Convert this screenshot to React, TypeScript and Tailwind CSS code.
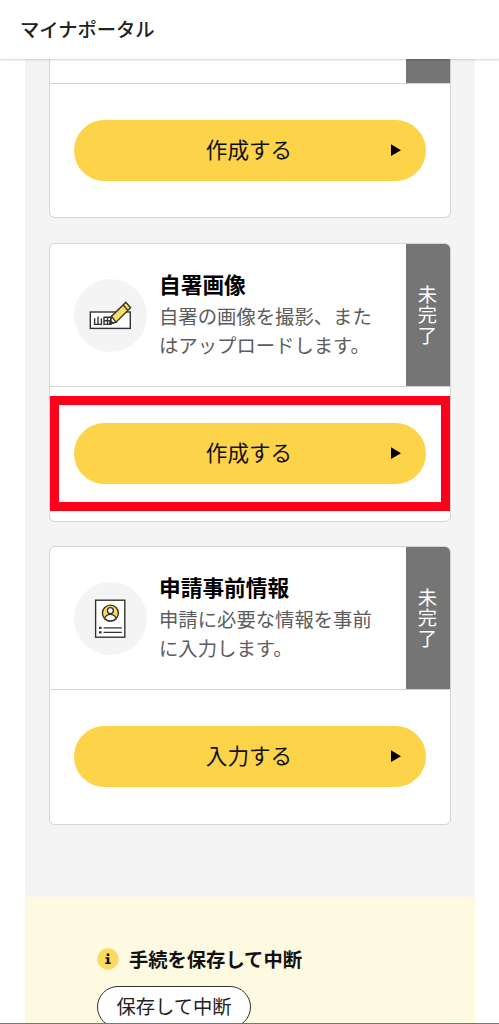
import type { ReactNode } from 'react';

function SignatureIcon() {
  return (
    <svg width="44" height="34" viewBox="0 0 44 34" fill="none" stroke="#333" strokeWidth="1.4">
      <rect x="1.3" y="13" width="40" height="16.4" fill="#fff" />
      <path d="M5.6 19.2v6.2h6.8v-6.2M9 17.4v8M15 18.2h7v7.2h-7zM18.5 18.2v7.2M15 21.8h7" />
      <path d="M21.3 24.4l1.2-7L36.8 3.3l4.8 5.5-14.6 14.4z" fill="#fbdc62" />
      <path d="M21.3 24.4l1.2-7 4.5 5.8z" fill="#fff" />
      <path d="M20.8 24.9l.7-3.4 2.4 2.6z" fill="#333" />
      <path d="M34.2 6l4.6 5.4" />
    </svg>
  );
}

function ProfileIcon() {
  return (
    <svg width="34" height="42" viewBox="0 0 34 42" fill="none" stroke="#333" strokeWidth="1.4">
      <rect x="1.6" y="2.2" width="29.2" height="37" fill="#fff" />
      <circle cx="16.4" cy="15.1" r="8" fill="#fbdc62" />
      <path d="M10.6 20.5c1.2-3.2 3.3-4.1 5.8-4.1s4.6.9 5.8 4.1c-3.4 3.3-8.2 3.3-11.6 0z" fill="#fff" />
      <circle cx="16.4" cy="12.6" r="3" fill="#fff" />
      <path d="M9.5 29.9h18.3M9.5 34.4h18.3" />
      <path d="M5 29.9h2.6M5 34.4h2.6" strokeWidth="2.4" />
    </svg>
  );
}

function ActionButton({ label }: { label: string }) {
  return (
    <button className="relative flex h-[61px] w-[352px] items-center justify-center rounded-full bg-[#fdd34a] text-[21.6px] leading-[30px] text-[#111]">
      <span className="-translate-x-px -translate-y-[2px]">{label}</span>
      <svg className="absolute top-[24px] right-[24px]" width="11" height="12" viewBox="0 0 11 12">
        <path d="M0 0.3L10 6.2L0 12Z" fill="#000" />
      </svg>
    </button>
  );
}

interface TaskCardProps {
  title: string;
  lines: string[];
  icon: ReactNode;
  action: string;
  highlighted?: boolean;
}

function TaskCard({ title, lines, icon, action, highlighted }: TaskCardProps) {
  return (
    <section className="relative h-[279px] rounded-[6px] border border-[#d4d4d4] bg-white">
      <div className="flex h-[143px] border-b border-[#d4d4d4]">
        <div className="flex flex-1 pl-[24px]">
          <div className="mt-[35px] flex size-[73px] items-center justify-center rounded-full bg-[#f4f4f4]">
            {icon}
          </div>
          <div className="mt-[25px] ml-[12px] whitespace-nowrap">
            <h2 className="mb-[3px] text-[21.7px] leading-[30px] font-bold text-black">{title}</h2>
            {lines.map((line) => (
              <p key={line} className="text-[19.35px] leading-[29px] text-[#5c5c5c]">
                {line}
              </p>
            ))}
          </div>
        </div>
        <div className="flex w-[44px] items-center justify-center rounded-tr-[5px] bg-[#757575] pr-[2px] text-[19.3px] text-white">
          <span className="tracking-[1px] [writing-mode:vertical-rl]">未完了</span>
        </div>
      </div>
      <div className="pt-[36px] pl-[24px]">
        <ActionButton label={action} />
      </div>
      {highlighted && (
        <div className="absolute top-[152px] left-0 h-[115px] w-[400px] border-[9px] border-[#ff001b]" />
      )}
    </section>
  );
}

export default function App() {
  return (
    <div className="flex h-[1024px] w-[499px] flex-col overflow-hidden border-b border-[#777] bg-white font-['Noto_Sans_CJK_JP',sans-serif]">
      <header className="z-10 flex h-[59px] shrink-0 items-center bg-white pb-[2px] pl-[20px] shadow-[0_1px_2px_rgba(0,0,0,0.18)]">
        <h1 className="text-[19.3px] leading-[28px] font-medium text-[#222]">マイナポータル</h1>
      </header>
      <main className="mr-[24px] ml-[25px] flex h-[838px] shrink-0 flex-col bg-[#f4f4f4] px-[24px]">
        <section className="mb-[25px] h-[159px] shrink-0 rounded-b-[6px] border border-t-0 border-[#d4d4d4] bg-white">
          <div className="flex h-[25px] justify-end border-b border-[#d4d4d4]">
            <div className="w-[44px] bg-[#757575]" />
          </div>
          <div className="pt-[36px] pl-[24px]">
            <ActionButton label="作成する" />
          </div>
        </section>
        <div className="flex flex-col gap-[24px]">
          <TaskCard
            title="自署画像"
            lines={['自署の画像を撮影、また', 'はアップロードします。']}
            icon={<SignatureIcon />}
            action="作成する"
            highlighted
          />
          <TaskCard
            title="申請事前情報"
            lines={['申請に必要な情報を事前', 'に入力します。']}
            icon={<ProfileIcon />}
            action="入力する"
          />
        </div>
      </main>
      <aside className="mr-[24px] ml-[25px] h-[200px] shrink-0 bg-[#fef9e1] pt-[47px] pl-[72px]">
        <div className="flex items-center gap-[10px]">
          <svg width="22" height="22" viewBox="0 0 22 22">
            <circle cx="11" cy="11" r="10.7" fill="#fbdb5f" />
            <path d="M9.7 5.6h2.6v2.3H9.7zM8.5 9.3h3.8v5.1h1.5v1.5H8.3v-1.5h1.5v-3.6H8.5z" fill="#111" />
          </svg>
          <h2 className="text-[19.3px] leading-[30px] font-bold text-[#111]">手続を保存して中断</h2>
        </div>
        <button className="mt-[12px] flex h-[42px] w-[154px] items-center justify-center rounded-full border border-[#333] bg-white pb-[2px] text-[19.3px] leading-[28px] text-[#222]">
          保存して中断
        </button>
      </aside>
    </div>
  );
}
